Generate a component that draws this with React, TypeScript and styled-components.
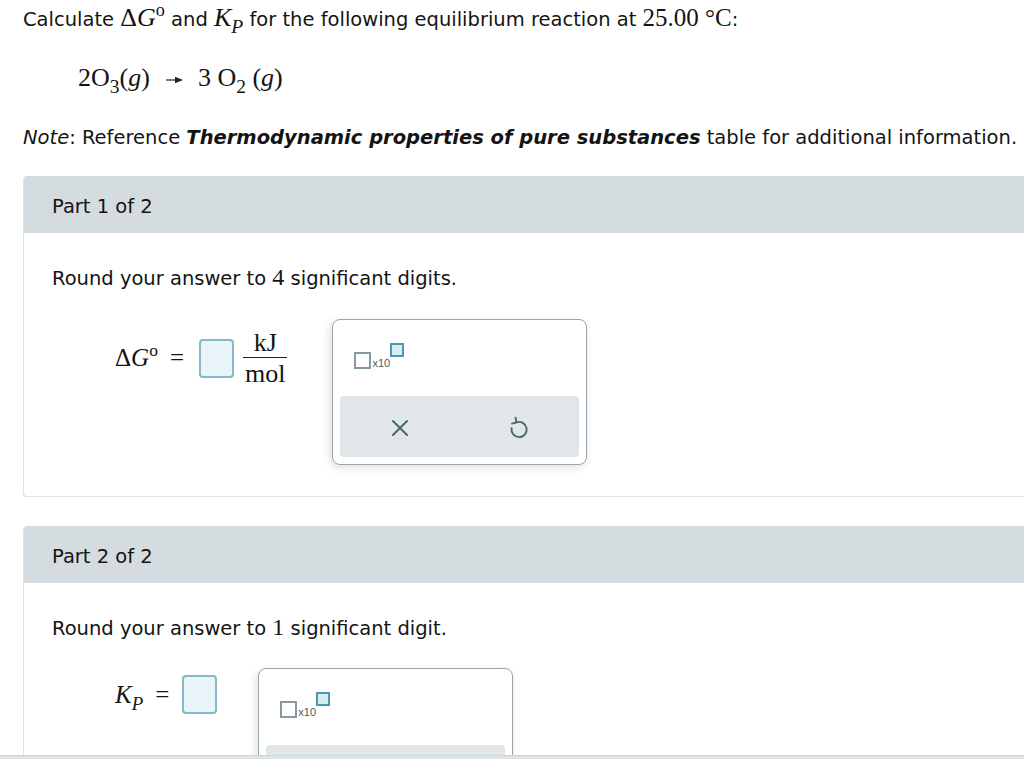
import styled, { createGlobalStyle } from 'styled-components';

const GlobalStyle = createGlobalStyle`
	html, body {
		margin: 0;
		padding: 0;
		background: #fff;
		overflow: hidden;
	}
	body {
		font-family: 'DejaVu Sans', Verdana, sans-serif;
		color: #141414;
	}
`;

const Page = styled.div`
	width: 1024px;
	height: 759px;
	padding: 7px 0 0 23px;
	box-sizing: border-box;
	position: relative;
	overflow: hidden;
`;

const Line = styled.p`
	margin: 0;
	height: 26px;
	font-size: 19.5px;
	line-height: 26px;
	white-space: nowrap;
`;

const Serif = styled.span<{ $size?: number; $italic?: boolean }>`
	font-family: 'Liberation Serif', 'Times New Roman', serif;
	font-size: ${({ $size }) => $size ?? 26}px;
	font-style: ${({ $italic }) => ($italic ? 'italic' : 'normal')};
	line-height: 0;
`;

const Sub = styled.sub`
	font-size: 0.75em;
	vertical-align: -0.35em;
	line-height: 0;
`;

const Sup = styled.sup`
	font-size: 0.7em;
	vertical-align: 0.55em;
	line-height: 0;
`;

const Equation = styled.div`
	margin: 32px 0 0 55px;
	height: 26px;
	font-family: 'Liberation Serif', 'Times New Roman', serif;
	font-size: 26px;
	line-height: 26px;
	display: flex;
	align-items: center;
`;

const Arrow = styled.span`
	display: inline-flex;
	margin: 4px 15px 0 16px;
	color: #222;
`;

const NoteLine = styled(Line)`
	margin-top: 34px;
`;

const Card = styled.section<{ $gap: number }>`
	margin-top: ${({ $gap }) => $gap}px;
	width: 1060px;
	border: 1px solid #dde2e5;
	border-top: none;
	border-radius: 4px;
	overflow: hidden;
`;

const CardHeader = styled.div`
	height: 57px;
	background: #d5dcdf;
	display: flex;
	align-items: center;
	padding: 3px 0 0 28px;
	box-sizing: border-box;
	font-size: 19.5px;
`;

const CardBody = styled.div<{ $height: number }>`
	height: ${({ $height }) => $height}px;
	padding: 33px 0 0 28px;
	box-sizing: border-box;
`;

const AnswerRow = styled.div<{ $gap: number; $top: number }>`
	display: flex;
	align-items: flex-start;
	margin: ${({ $top }) => $top}px 0 0 63px;
	gap: ${({ $gap }) => $gap}px;
`;

const MathGroup = styled.div<{ $top: number }>`
	display: flex;
	align-items: center;
	margin-top: ${({ $top }) => $top}px;
	font-family: 'Liberation Serif', 'Times New Roman', serif;
	font-size: 25px;
`;

const Equals = styled.span<{ $left: number; $right: number }>`
	margin: 0 ${({ $right }) => $right}px 0 ${({ $left }) => $left}px;
`;

const InputBox = styled.span`
	display: inline-block;
	width: 31px;
	height: 35px;
	border: 2px solid #86b8c6;
	border-radius: 4px;
	background: #e9f4f8;
`;

const Fraction = styled.span`
	display: inline-flex;
	flex-direction: column;
	align-items: center;
	margin-left: 11px;
	font-size: 26px;
	line-height: 25px;
`;

const Numer = styled.span`
	padding: 0 2px 2px;
	border-bottom: 1px solid #222;
	width: 100%;
	text-align: center;
`;

const Denom = styled.span`
	padding-top: 3px;
`;

const Palette = styled.div<{ $height: number }>`
	width: 255px;
	height: ${({ $height }) => $height}px;
	border: 1px solid #97a4ab;
	border-radius: 8px;
	box-shadow: -2px 3px 8px rgba(0, 0, 0, 0.12);
	background: #fff;
	box-sizing: border-box;
	padding: 22px 7px 0 7px;
	display: flex;
	flex-direction: column;
	flex-shrink: 0;
`;

const SciButton = styled.div`
	display: flex;
	align-items: flex-end;
	margin-left: 14px;
	height: 28px;
`;

const BaseBox = styled.span`
	display: inline-block;
	width: 17px;
	height: 17px;
	border: 2px solid #8599a1;
	box-sizing: border-box;
	margin-bottom: 1px;
`;

const Times10 = styled.span`
	font-family: 'Liberation Sans', Arial, sans-serif;
	font-size: 11px;
	color: #4d5b63;
	line-height: 11px;
	margin-bottom: 1px;
	margin-left: 1px;
`;

const ExpBox = styled.span`
	display: inline-block;
	width: 14px;
	height: 14px;
	border: 2px solid #4d96ad;
	background: #d6edf4;
	box-sizing: border-box;
	align-self: flex-start;
	margin-top: 1px;
`;

const ActionBar = styled.div`
	margin-top: 26px;
	height: 61px;
	border-radius: 4px;
	background: #e1e6e9;
	display: flex;
	align-items: center;
	justify-content: space-around;
`;

const IconButton = styled.span`
	display: inline-flex;
	color: #4a6772;
	margin-top: 2px;
`;

const Footer = styled.div`
	position: absolute;
	left: 0;
	right: 0;
	bottom: 0;
	height: 3px;
	background: #dde3e6;
	border-top: 1px solid #cdd5d9;
`;

const ReactionArrow = () => (
	<svg width='17' height='8' viewBox='0 0 17 8'>
		<path d='M0 4 H11' stroke='currentColor' strokeWidth='1.2' />
		<path d='M9 0.8 L17 4 L9 7.2 Z' fill='currentColor' />
	</svg>
);

const CloseIcon = () => (
	<svg width='18' height='18' viewBox='0 0 18 18' fill='none' stroke='currentColor' strokeWidth='2' strokeLinecap='round'>
		<path d='M2 2 L16 16 M16 2 L2 16' />
	</svg>
);

const UndoIcon = () => (
	<svg width='20' height='23' viewBox='0 0 20 23' fill='none' stroke='currentColor' strokeWidth='1.9' strokeLinecap='round' strokeLinejoin='round'>
		<path d='M7.4 6.4 A7.6 7.6 0 1 1 2.6 12.2' />
		<path d='M6.6 1.6 L7.4 6.4 L3 7.6' />
	</svg>
);

const SciNotation = () => (
	<SciButton>
		<BaseBox />
		<Times10>x10</Times10>
		<ExpBox />
	</SciButton>
);

export default function App() {
	return (
		<>
			<GlobalStyle />
			<Page>
				<Line>
					Calculate{' '}
					<Serif>
						Δ<Serif $italic>G</Serif>
						<Sup>o</Sup>
					</Serif>{' '}
					and{' '}
					<Serif $italic>
						K<Sub>P</Sub>
					</Serif>{' '}
					for the following equilibrium reaction at <Serif $size={25}>25.00 °C</Serif>:
				</Line>
				<Equation>
					<span>
						2O<Sub>3</Sub>(<i>g</i>)
					</span>
					<Arrow>
						<ReactionArrow />
					</Arrow>
					<span>
						3 O<Sub>2</Sub> (<i>g</i>)
					</span>
				</Equation>
				<NoteLine>
					<i>Note</i>: Reference <b><i>Thermodynamic properties of pure substances</i></b> table for additional
					information.
				</NoteLine>

				<Card $gap={25}>
					<CardHeader>Part 1 of 2</CardHeader>
					<CardBody $height={263}>
						<Line>
							Round your answer to <Serif $size={24}>4</Serif> significant digits.
						</Line>
						<AnswerRow $gap={47} $top={27}>
							<MathGroup $top={11}>
								<span>
									Δ<i>G</i>
									<Sup>o</Sup>
								</span>
								<Equals $left={12} $right={15}>=</Equals>
								<InputBox />
								<Fraction>
									<Numer>kJ</Numer>
									<Denom>mol</Denom>
								</Fraction>
							</MathGroup>
							<Palette $height={146}>
								<SciNotation />
								<ActionBar>
									<IconButton>
										<CloseIcon />
									</IconButton>
									<IconButton>
										<UndoIcon />
									</IconButton>
								</ActionBar>
							</Palette>
						</AnswerRow>
					</CardBody>
				</Card>

				<Card $gap={29}>
					<CardHeader>Part 2 of 2</CardHeader>
					<CardBody $height={200}>
						<Line>
							Round your answer to <Serif $size={24}>1</Serif> significant digit.
						</Line>
						<AnswerRow $gap={41} $top={26}>
							<MathGroup $top={7}>
								<span>
									<i>K</i>
									<Sub>
										<i>P</i>
									</Sub>
								</span>
								<Equals $left={12} $right={13}>=</Equals>
								<InputBox />
							</MathGroup>
							<Palette $height={146}>
								<SciNotation />
								<ActionBar />
							</Palette>
						</AnswerRow>
					</CardBody>
				</Card>
				<Footer />
			</Page>
		</>
	);
}
